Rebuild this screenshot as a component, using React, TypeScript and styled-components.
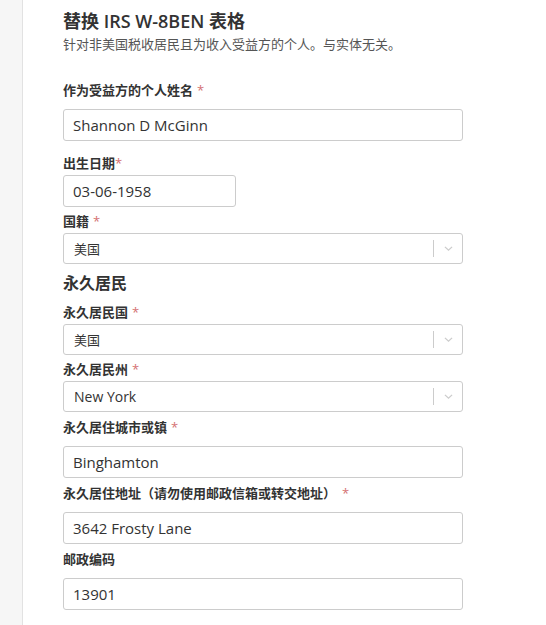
import {FC} from 'react';
import styled, {createGlobalStyle} from "styled-components";

const GlobalStyle = createGlobalStyle`
  body {
    margin: 0;
    background: #fff;
    font-family: "Open Sans", "Noto Sans CJK SC", sans-serif;
    color: #333;
  }
`

type FieldProps = {
    label: string
    required?: boolean
    tight?: boolean
    starGap?: number
    top: number
    children: React.ReactNode
}

const Field: FC<FieldProps> = ({label, required, tight, starGap = 4, top, children}) => (
    <FieldGroup $top={top}>
        <Label $tight={tight}>
            {label}
            {required && <Star $gap={starGap}>*</Star>}
        </Label>
        {children}
    </FieldGroup>
)

const Chevron: FC = () => (
    <svg width="13" height="13" viewBox="0 0 20 20">
        <path d="M4.5 7.5 L10 12.5 L15.5 7.5" fill="none" stroke="#cccccc" strokeWidth="2"/>
    </svg>
)

const SelectBox: FC<{value: string, latin?: boolean}> = ({value, latin}) => (
    <Select>
        <SelectValue $latin={latin}>{value}</SelectValue>
        <Separator/>
        <Indicator><Chevron/></Indicator>
    </Select>
)

const App: FC = () => {
    return (
        <Page>
            <GlobalStyle/>
            <Sidebar/>
            <Main>
                <Title>替换 IRS W-8BEN 表格</Title>
                <Subtitle>针对非美国税收居民且为收入受益方的个人。与实体无关。</Subtitle>

                <Field label="作为受益方的个人姓名" required top={27}>
                    <Input $width={400}>Shannon D McGinn</Input>
                </Field>
                <Field label="出生日期" required tight starGap={0} top={13}>
                    <Input $width={173}>03-06-1958</Input>
                </Field>
                <Field label="国籍" required tight top={5}>
                    <SelectBox value="美国"/>
                </Field>

                <Section>永久居民</Section>

                <Field label="永久居民国" required tight top={9}>
                    <SelectBox value="美国"/>
                </Field>
                <Field label="永久居民州" required tight top={5}>
                    <SelectBox value="New York" latin/>
                </Field>
                <Field label="永久居住城市或镇" required top={6}>
                    <Input $width={400}>Binghamton</Input>
                </Field>
                <Field label="永久居住地址（请勿使用邮政信箱或转交地址）" required starGap={6} top={6}>
                    <Input $width={400}>3642 Frosty Lane</Input>
                </Field>
                <Field label="邮政编码" top={6}>
                    <Input $width={400}>13901</Input>
                </Field>
            </Main>
        </Page>
    );
};

export default App;

const Page = styled.div`
  display: flex;
  min-height: 625px;
`

const Sidebar = styled.aside`
  width: 22px;
  flex-shrink: 0;
  background: #f6f6f6;
  border-right: 1px solid #e2e2e2;
`

const Main = styled.main`
  flex: 1;
  padding: 9px 0 16px 40px;
  display: flex;
  flex-direction: column;
  align-items: flex-start;
`

const Title = styled.h1`
  margin: 0;
  font-size: 18px;
  line-height: 24px;
  font-weight: 600;
  color: #333;
`

const Subtitle = styled.p`
  margin: 1px 0 0;
  font-size: 13px;
  line-height: 20px;
  color: #555;
`

const Section = styled.h2`
  margin: 8px 0 0;
  font-size: 16px;
  line-height: 22px;
  font-weight: 600;
  color: #333;
`

const FieldGroup = styled.div<{$top: number}>`
  margin-top: ${props => props.$top}px;
  display: flex;
  flex-direction: column;
  align-items: flex-start;
`

const Label = styled.label<{$tight?: boolean}>`
  font-size: 13px;
  line-height: 18px;
  font-weight: 700;
  color: #333;
  margin-bottom: ${props => props.$tight ? 3 : 10}px;
`

const Star = styled.span<{$gap: number}>`
  margin-left: ${props => props.$gap}px;
  color: #d47272;
  font-weight: 400;
`

const Input = styled.div<{$width: number}>`
  box-sizing: border-box;
  width: ${props => props.$width}px;
  height: 32px;
  padding: 0 9px;
  display: flex;
  align-items: center;
  border: 1px solid #cccccc;
  border-radius: 3px;
  font-size: 15px;
  color: #333;
`

const Select = styled.div`
  box-sizing: border-box;
  width: 400px;
  height: 31px;
  display: flex;
  align-items: center;
  border: 1px solid #cccccc;
  border-radius: 3px;
`

const SelectValue = styled.span<{$latin?: boolean}>`
  flex: 1;
  padding-left: 10px;
  font-size: ${props => props.$latin ? 14 : 13}px;
  color: #333;
`

const Separator = styled.span`
  width: 1px;
  height: 17px;
  background: #cccccc;
`

const Indicator = styled.span`
  width: 28px;
  display: flex;
  justify-content: center;
  align-items: center;
`
